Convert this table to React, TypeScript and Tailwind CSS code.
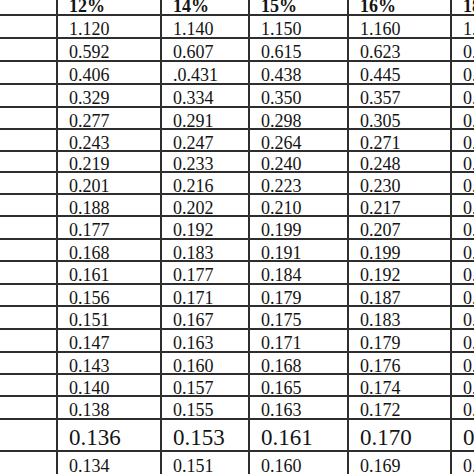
import React from 'react';

// ─── Data ─────────────────────────────────────────────────────────────────────
const headers = ['12%', '14%', '15%', '16%', '18%'];

interface Row {
    h: string;
    big?: boolean;
    values: string[];
}

const rows: Row[] = [
    { h: 'h-[23px]', values: ['1.120', '1.140', '1.150', '1.160', '1.180'] },
    { h: 'h-[23px]', values: ['0.592', '0.607', '0.615', '0.623', '0.639'] },
    { h: 'h-[23px]', values: ['0.406', '.0.431', '0.438', '0.445', '0.460'] },
    { h: 'h-[23px]', values: ['0.329', '0.334', '0.350', '0.357', '0.372'] },
    { h: 'h-[22px]', values: ['0.277', '0.291', '0.298', '0.305', '0.320'] },
    { h: 'h-[22px]', values: ['0.243', '0.247', '0.264', '0.271', '0.286'] },
    { h: 'h-[21px]', values: ['0.219', '0.233', '0.240', '0.248', '0.262'] },
    { h: 'h-[22px]', values: ['0.201', '0.216', '0.223', '0.230', '0.245'] },
    { h: 'h-[22px]', values: ['0.188', '0.202', '0.210', '0.217', '0.232'] },
    { h: 'h-[23px]', values: ['0.177', '0.192', '0.199', '0.207', '0.223'] },
    { h: 'h-[22px]', values: ['0.168', '0.183', '0.191', '0.199', '0.215'] },
    { h: 'h-[23px]', values: ['0.161', '0.177', '0.184', '0.192', '0.209'] },
    { h: 'h-[22px]', values: ['0.156', '0.171', '0.179', '0.187', '0.204'] },
    { h: 'h-[23px]', values: ['0.151', '0.167', '0.175', '0.183', '0.200'] },
    { h: 'h-[23px]', values: ['0.147', '0.163', '0.171', '0.179', '0.196'] },
    { h: 'h-[22px]', values: ['0.143', '0.160', '0.168', '0.176', '0.194'] },
    { h: 'h-[22px]', values: ['0.140', '0.157', '0.165', '0.174', '0.191'] },
    { h: 'h-[23px]', values: ['0.138', '0.155', '0.163', '0.172', '0.190'] },
    { h: 'h-[32px]', big: true, values: ['0.136', '0.153', '0.161', '0.170', '0.188'] },
    { h: 'h-[24px]', values: ['0.134', '0.151', '0.160', '0.169', '0.187'] },
];

const cell = 'flex items-center border-r-2 border-b-2 border-[#2e2e2e] pl-[11px] pt-[5px] leading-none whitespace-nowrap overflow-hidden';

// ─── Main Component ───────────────────────────────────────────────────────────
export default function App() {
    return (
        <div className="w-[474px] h-[474px] overflow-hidden bg-white text-[#141414]" style={{ fontFamily: '"Liberation Serif", "Times New Roman", serif' }}>
            <div className="grid grid-cols-[58px_104px_88px_99px_103px_110px] -mt-[7px]">
                {/* Header row */}
                <div className={`${cell} h-[23px]`} />
                {headers.map(h => (
                    <div key={h} className={`${cell} h-[23px] text-[18px] font-bold`}>{h}</div>
                ))}

                {/* Body rows */}
                {rows.map((r, i) => (
                    <React.Fragment key={i}>
                        <div className={`${cell} ${r.h}`} />
                        {r.values.map((v, j) => (
                            <div key={j} className={`${cell} ${r.h} ${r.big ? 'text-[23px]' : 'text-[18px]'}`}>{v}</div>
                        ))}
                    </React.Fragment>
                ))}
            </div>
        </div>
    );
}
